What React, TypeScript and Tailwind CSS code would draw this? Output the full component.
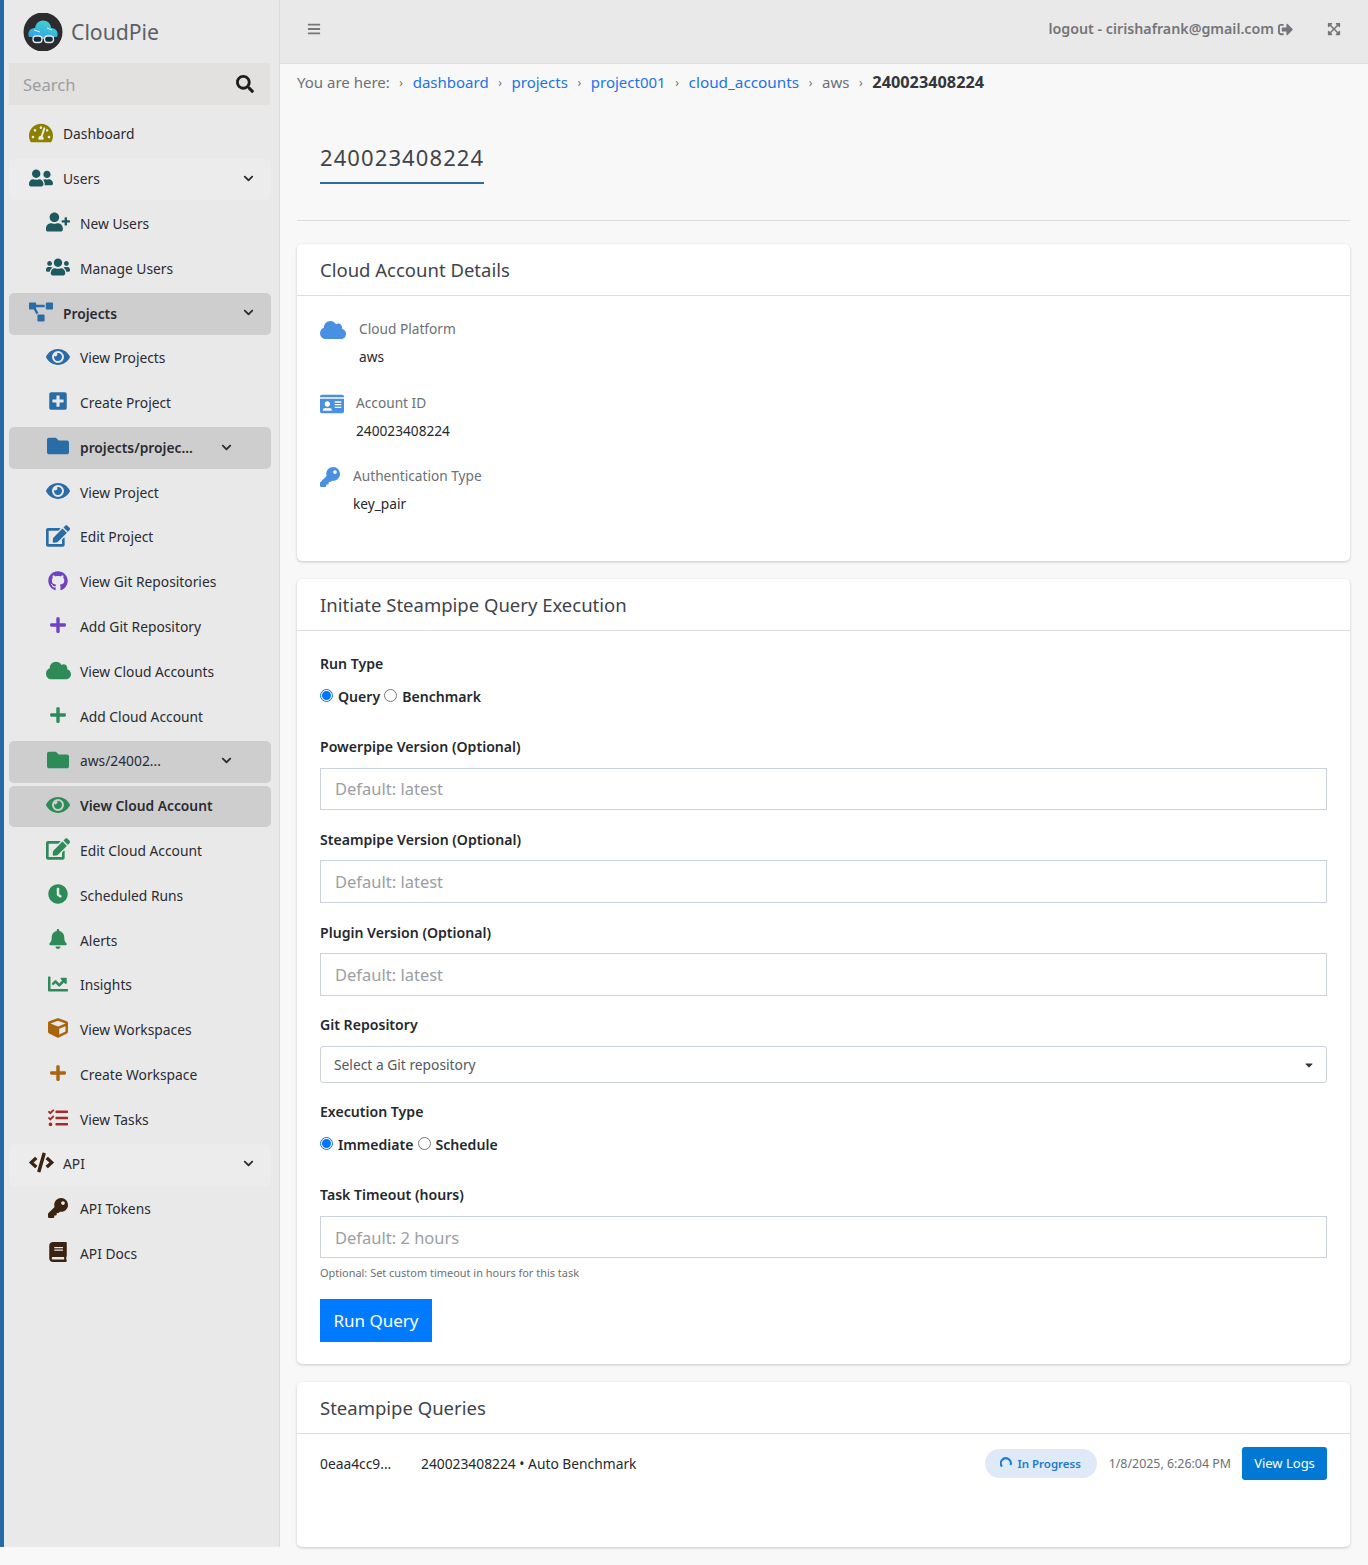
import React from "react";
import {
  FaTachometerAlt, FaUserFriends, FaUserPlus, FaUsers, FaProjectDiagram, FaEye, FaPlusSquare, FaFolder, FaEdit,
  FaGithub, FaPlus, FaCloud, FaClock, FaBell, FaChartLine, FaCube, FaTasks, FaCode, FaKey, FaBook, FaChevronDown,
  FaSearch, FaExpandArrowsAlt, FaIdCard, FaBars, FaCaretDown, FaSignOutAlt,
} from "react-icons/fa";

type RowProps = {
  icon: React.ComponentType<{ className?: string }>;
  label: string;
  iconClass: string;
  sub?: boolean;
  active?: boolean;
  light?: boolean;
  bold?: boolean;
  chevron?: "far" | "near";
};

function Row({ icon: Icon, label, iconClass, sub, active, light, bold, chevron }: RowProps) {
  return (
    <div
      className={`mx-[9px] mb-[3.2px] flex h-[41.6px] w-[262px] items-center rounded-[5px] ${active ? "bg-[#cecece]" : light ? "bg-[#ececec]" : ""} ${sub ? "pl-[36px]" : "pl-[19px]"} text-[13.8px] text-[#2b2b33] ${bold ? "font-semibold" : ""}`}
    >
      <span className="flex w-[26px] shrink-0 items-center justify-center -translate-y-[2px]">
        <Icon className={iconClass} />
      </span>
      <span className="ml-[9px] whitespace-nowrap">{label}</span>
      {chevron && (
        <FaChevronDown className={`-translate-y-[1px] text-[11px] text-[#2b2b33] ${chevron === "far" ? "ml-auto mr-[17px]" : "ml-auto mr-[39px]"}`} />
      )}
    </div>
  );
}

function Logo() {
  return (
    <svg width="40" height="38" viewBox="0 0 40 38" className="shrink-0">
      <defs>
        <linearGradient id="cloudFill" x1="0" y1="1" x2="0.6" y2="0">
          <stop offset="0" stopColor="#2f9fe4" />
          <stop offset="1" stopColor="#45d0d2" />
        </linearGradient>
      </defs>
      <circle cx="20" cy="19" r="19.5" fill="#2c2c2e" />
      <path d="M6 24c-2-5 1-9 6-9 1-6 6-9 11-7 3 1 5 4 5 7 5 0 8 4 6 9z" fill="url(#cloudFill)" />
      <path d="M11 17l6 2M24 15l5 2" stroke="#d8f4f6" strokeWidth="1" />
      <rect x="10" y="23" width="9" height="6.5" rx="3" fill="#10303f" stroke="#e8e8e8" strokeWidth="1.3" />
      <rect x="21.5" y="23" width="9" height="6.5" rx="3" fill="#10303f" stroke="#e8e8e8" strokeWidth="1.3" />
      <path d="M19 25h2.5" stroke="#e8e8e8" strokeWidth="1.3" />
    </svg>
  );
}

function Sidebar() {
  const blue = "text-[#2a6ca6]";
  const green = "text-[#2e8b57]";
  const teal = "text-[#1d5a60]";
  const purple = "text-[#6f42c1]";
  const brown = "text-[#a9640f]";
  const dark = "text-[#3a2310]";
  return (
    <aside className="w-[280px] shrink-0 border-l-[4px] border-r border-l-[#266ba5] border-r-[#dcdcdc] bg-[#e9e9e9]">
      <div className="ml-[19px] flex h-[63px] items-center">
        <Logo />
        <span className="ml-[8px] text-[21.2px] text-[#5b6068]">CloudPie</span>
      </div>
      <div className="ml-[5px] mb-[9px] flex h-[42px] w-[261px] items-center justify-between bg-[#e2e1df] pl-[14px] pr-[16px]">
        <span className="translate-y-[1px] text-[16.6px] text-[#9a9ea3]">Search</span>
        <FaSearch className="text-[18px] text-[#1d1d1f]" />
      </div>
      <div className="-ml-[4px]">
        <Row icon={FaTachometerAlt} label="Dashboard" iconClass="text-[24px] text-[#8b8000]" />
        <Row icon={FaUserFriends} label="Users" iconClass={`text-[24px] ${teal}`} light chevron="far" />
        <Row icon={FaUserPlus} label="New Users" iconClass={`text-[24px] ${teal}`} sub />
        <Row icon={FaUsers} label="Manage Users" iconClass={`text-[24px] ${teal}`} sub />
        <Row icon={FaProjectDiagram} label="Projects" iconClass={`text-[24px] ${blue}`} active bold chevron="far" />
        <Row icon={FaEye} label="View Projects" iconClass={`text-[24px] ${blue}`} sub />
        <Row icon={FaPlusSquare} label="Create Project" iconClass={`text-[20px] ${blue}`} sub />
        <Row icon={FaFolder} label="projects/projec..." iconClass={`text-[22px] ${blue}`} sub active bold chevron="near" />
        <Row icon={FaEye} label="View Project" iconClass={`text-[24px] ${blue}`} sub />
        <Row icon={FaEdit} label="Edit Project" iconClass={`text-[24px] ${blue}`} sub />
        <Row icon={FaGithub} label="View Git Repositories" iconClass={`text-[20px] ${purple}`} sub />
        <Row icon={FaPlus} label="Add Git Repository" iconClass={`text-[18px] ${purple}`} sub />
        <Row icon={FaCloud} label="View Cloud Accounts" iconClass={`text-[25px] ${green}`} sub />
        <Row icon={FaPlus} label="Add Cloud Account" iconClass={`text-[18px] ${green}`} sub />
        <Row icon={FaFolder} label="aws/24002..." iconClass={`text-[22px] ${green}`} sub active chevron="near" />
        <Row icon={FaEye} label="View Cloud Account" iconClass={`text-[24px] ${green}`} sub active bold />
        <Row icon={FaEdit} label="Edit Cloud Account" iconClass={`text-[24px] ${green}`} sub />
        <Row icon={FaClock} label="Scheduled Runs" iconClass={`text-[20px] ${green}`} sub />
        <Row icon={FaBell} label="Alerts" iconClass={`text-[20px] ${green}`} sub />
        <Row icon={FaChartLine} label="Insights" iconClass={`text-[20px] ${green}`} sub />
        <Row icon={FaCube} label="View Workspaces" iconClass={`text-[20px] ${brown}`} sub />
        <Row icon={FaPlus} label="Create Workspace" iconClass={`text-[18px] ${brown}`} sub />
        <Row icon={FaTasks} label="View Tasks" iconClass="text-[20px] text-[#a52a2a]" sub />
        <Row icon={FaCode} label="API" iconClass={`text-[25px] ${dark}`} light chevron="far" />
        <Row icon={FaKey} label="API Tokens" iconClass={`text-[20px] ${dark}`} sub />
        <Row icon={FaBook} label="API Docs" iconClass={`text-[20px] ${dark}`} sub />
      </div>
    </aside>
  );
}

function Card({ title, className, children }: { title: string; className: string; children: React.ReactNode }) {
  return (
    <section className={`rounded-[5px] bg-white shadow-[0_1px_3px_rgba(0,0,0,0.2)] ${className}`}>
      <h2 className="flex h-[52px] items-center border-b border-b-[#dedede] px-[23px] text-[18.5px] font-normal text-[#3f444b]">{title}</h2>
      {children}
    </section>
  );
}

function Detail({ icon, gap, height, label, value }: { icon: React.ReactNode; gap: string; height: string; label: string; value: string }) {
  return (
    <div className={`flex items-start ${height}`}>
      <span className="mt-[5px] flex h-[20px] items-center">{icon}</span>
      <div className={`${gap} text-[13.7px]`}>
        <div className="flex h-[28px] items-center text-[#6c7076]">{label}</div>
        <div className="flex h-[28px] items-center text-[#25282d]">{value}</div>
      </div>
    </div>
  );
}

function FieldLabel({ children, className }: { children: React.ReactNode; className: string }) {
  return <div className={`text-[14.1px] font-semibold leading-[20px] text-[#25282d] ${className}`}>{children}</div>;
}

function TextInput({ placeholder, className }: { placeholder: string; className: string }) {
  return (
    <div className={`flex items-center border border-[#ccd2da] bg-white pl-[14px] text-[16.5px] text-[#9b9ea3] ${className}`}>
      {placeholder}
    </div>
  );
}

function Radios({ a, b, className }: { a: string; b: string; className: string }) {
  return (
    <div className={`flex items-center text-[14.1px] font-semibold leading-[20px] text-[#25282d] ${className}`}>
      <span className="flex h-[13px] w-[13px] -translate-y-[2px] items-center justify-center rounded-full border border-[#0075ff] bg-white">
        <span className="h-[9px] w-[9px] rounded-full bg-[#0075ff]" />
      </span>
      <span className="ml-[5px]">{a}</span>
      <span className="ml-[4px] h-[13px] w-[13px] -translate-y-[2px] rounded-full border border-[#767676] bg-white" />
      <span className="ml-[5px]">{b}</span>
    </div>
  );
}

export default function App() {
  return (
    <div className="min-h-screen bg-[#f8f8f8] pb-[18px] font-['Noto_Sans','Open_Sans',sans-serif]">
      <div className="flex h-[1547px]">
        <Sidebar />
        <main className="min-w-0 flex-1">
          <header className="flex h-[64px] items-center border-b border-b-[#dfdfdf] bg-[#e9e9e9] pb-[5px] pl-[27px] pr-[27px] text-[#75757a]">
            <FaBars className="text-[14px]" />
            <span className="ml-auto text-[14.25px] font-semibold">logout - cirishafrank@gmail.com</span>
            <FaSignOutAlt className="ml-[4px] text-[15px]" />
            <FaExpandArrowsAlt className="ml-[34px] text-[14px]" />
          </header>
          <div className="pl-[17px] pr-[18px]">
            <nav className="flex h-[37px] items-center text-[15px] text-[#6c7076]">
              <span>You are here:</span>
              <Crumb /><a className="text-[#1a73e8]">dashboard</a>
              <Crumb /><a className="text-[#1a73e8]">projects</a>
              <Crumb /><a className="text-[#1a73e8]">project001</a>
              <Crumb /><a className="text-[15.3px] text-[#1a73e8]">cloud_accounts</a>
              <Crumb /><span>aws</span>
              <Crumb /><span className="text-[16.3px] font-bold text-[#33363b]">240023408224</span>
            </nav>
            <div className="border-b border-b-[#dcdcdc] pl-[23px] pt-[36px] pb-[36px]">
              <h1 className="inline-block h-[47px] border-b-2 border-b-[#2a6ca6] text-[22px] leading-[40px] tracking-[1.1px] font-normal text-[#3f444b]">240023408224</h1>
            </div>
            <Card title="Cloud Account Details" className="mt-[23px] h-[317px]">
              <div className="pl-[23px] pt-[19px]">
                <Detail height="h-[74px]" icon={<FaCloud className="text-[26px] text-[#4a90e2]" />} gap="ml-[13px]" label="Cloud Platform" value="aws" />
                <Detail height="h-[73px]" icon={<FaIdCard className="text-[24px] text-[#4a90e2]" />} gap="ml-[12px]" label="Account ID" value="240023408224" />
                <Detail height="h-[73px]" icon={<FaKey className="text-[20px] text-[#4a90e2]" />} gap="ml-[13px]" label="Authentication Type" value="key_pair" />
              </div>
            </Card>
            <Card title="Initiate Steampipe Query Execution" className="mt-[18px] h-[785px]">
              <div className="px-[23px] pt-[23px]">
                <FieldLabel className="">Run Type</FieldLabel>
                <Radios a="Query" b="Benchmark" className="mt-[13px]" />
                <FieldLabel className="mt-[30px]">Powerpipe Version (Optional)</FieldLabel>
                <TextInput placeholder="Default: latest" className="mt-[11px] h-[42px]" />
                <FieldLabel className="mt-[20px]">Steampipe Version (Optional)</FieldLabel>
                <TextInput placeholder="Default: latest" className="mt-[10px] h-[43px] pt-[1px]" />
                <FieldLabel className="mt-[20px]">Plugin Version (Optional)</FieldLabel>
                <TextInput placeholder="Default: latest" className="mt-[10px] h-[43px] pt-[1px]" />
                <FieldLabel className="mt-[19px]">Git Repository</FieldLabel>
                <div className="mt-[11px] flex h-[37px] items-center justify-between rounded-[3px] border border-[#ccd2da] bg-white pl-[13px] pr-[11px] pt-[1px] text-[13.8px] text-[#55585e]">
                  <span>Select a Git repository</span>
                  <FaCaretDown className="text-[12px] text-[#33363b]" />
                </div>
                <FieldLabel className="mt-[19px]">Execution Type</FieldLabel>
                <Radios a="Immediate" b="Schedule" className="mt-[13px]" />
                <FieldLabel className="mt-[30px]">Task Timeout (hours)</FieldLabel>
                <TextInput placeholder="Default: 2 hours" className="mt-[11px] h-[42px] pt-[2px]" />
                <div className="mt-[6px] h-[18px] text-[10.95px] leading-[18px] text-[#6c7076]">Optional: Set custom timeout in hours for this task</div>
                <button className="mt-[17px] h-[43px] w-[112px] bg-[#007bff] text-[17px] text-white">Run Query</button>
              </div>
            </Card>
            <Card title="Steampipe Queries" className="mt-[18px] h-[165px]">
              <div className="flex items-center pl-[23px] pr-[23px] pt-[13px] text-[13.8px]">
                <span className="w-[101px] translate-y-[1px] font-normal text-[#25282d]">0eaa4cc9...</span>
                <span className="translate-y-[1px] text-[#25282d]">240023408224 • Auto Benchmark</span>
                <span className="ml-auto flex h-[29px] w-[112px] items-center justify-center rounded-full bg-[#deeaf8] text-[11.5px] font-semibold text-[#1a7bd0]">
                  <svg width="12" height="12" viewBox="0 0 12 12" className="mr-[5px] -translate-y-[1px]">
                    <path d="M2 9.5A5 5 0 1 1 10.5 8" fill="none" stroke="#1a7bd0" strokeWidth="2" />
                  </svg>
                  In Progress
                </span>
                <span className="ml-[12px] translate-y-[1px] text-[12.4px] text-[#6c7076]">1/8/2025, 6:26:04 PM</span>
                <button className="ml-[11px] h-[33px] w-[85px] rounded-[3px] bg-[#0078d4] text-[13px] text-white">View Logs</button>
              </div>
            </Card>
          </div>
        </main>
      </div>
    </div>
  );
}

function Crumb() {
  return <span className="mx-[9.6px] text-[12px] text-[#6c7076]">›</span>;
}
